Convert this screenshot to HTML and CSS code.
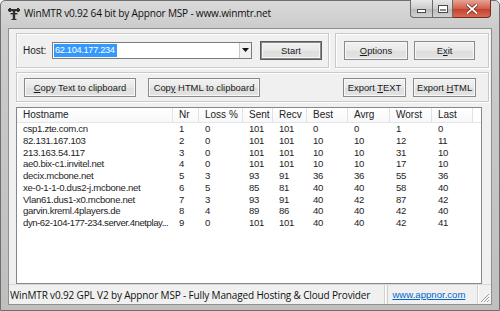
FILE: index.html
```html
<!DOCTYPE html>
<html>
<head>
<meta charset="utf-8">
<link rel="stylesheet" href="styles.css">
</head>
<body>
<div class="window">
  <div class="titlebar">
    <svg class="appicon" width="12" height="12" viewBox="0 0 12 12">
      <rect x="0" y="1" width="12" height="2.2" fill="#2e2e2e"/>
      <rect x="1" y="0" width="2" height="4" fill="#2e2e2e"/>
      <rect x="9" y="0" width="2" height="4" fill="#2e2e2e"/>
      <rect x="4.8" y="3" width="2.4" height="9" fill="#2e2e2e"/>
      <rect x="2.5" y="5" width="7" height="1.4" fill="#2e2e2e"/>
      <rect x="3.5" y="11" width="5" height="1" fill="#2e2e2e"/>
    </svg>
    <span class="title">WinMTR v0.92 64 bit by Appnor MSP - www.winmtr.net</span>
    <div class="winbtns">
      <div class="wb wb-min"><span class="minglyph"></span></div>
      <div class="wb wb-max"><span class="maxglyph"></span></div>
      <div class="wb wb-close">
        <svg width="12" height="10" viewBox="0 0 12 10"><path d="M1.5 1 L10.5 9 M10.5 1 L1.5 9" stroke="#6b1d14" stroke-width="3.2" stroke-linecap="square"/><path d="M1.5 1 L10.5 9 M10.5 1 L1.5 9" stroke="#fff" stroke-width="1.8" stroke-linecap="square"/></svg>
      </div>
    </div>
  </div>
  <div class="client">
    <div class="row1">
      <div class="group g-host">
        <span class="lbl">Host:</span>
        <div class="combo">
          <span class="combo-text"><span class="sel">62.104.177.234</span></span>
          <span class="combo-btn"><svg width="7" height="4" viewBox="0 0 7 4"><path d="M0 0 H7 L3.5 4 Z" fill="#111"/></svg></span>
        </div>
        <div class="btn btn-default btn-start"><span>Start</span></div>
      </div>
      <div class="group g-opts">
        <div class="btn btn-opt"><span><u>O</u>ptions</span></div>
        <div class="btn btn-exit"><span>E<u>x</u>it</span></div>
      </div>
    </div>
    <div class="group g-copy">
      <div class="btn btn-copy1"><span><u>C</u>opy Text to clipboard</span></div>
      <div class="btn btn-copy2"><span>Cop<u>y</u> HTML to clipboard</span></div>
      <div class="spacer"></div>
      <div class="btn btn-exp1"><span>Export <u>T</u>EXT</span></div>
      <div class="btn btn-exp2"><span>Export <u>H</u>TML</span></div>
    </div>
    <div class="listrow">
      <div class="list">
        <div class="grid head">
          <span>Hostname</span><span>Nr</span><span>Loss %</span><span>Sent</span><span>Recv</span><span>Best</span><span>Avrg</span><span>Worst</span><span>Last</span>
        </div>
        <div class="grid rows">
          <span>csp1.zte.com.cn</span><span>1</span><span>0</span><span>101</span><span>101</span><span>0</span><span>0</span><span>1</span><span>0</span>
          <span>82.131.167.103</span><span>2</span><span>0</span><span>101</span><span>101</span><span>10</span><span>10</span><span>12</span><span>11</span>
          <span>213.163.54.117</span><span>3</span><span>0</span><span>101</span><span>101</span><span>10</span><span>10</span><span>31</span><span>10</span>
          <span>ae0.bix-c1.invitel.net</span><span>4</span><span>0</span><span>101</span><span>101</span><span>10</span><span>10</span><span>17</span><span>10</span>
          <span>decix.mcbone.net</span><span>5</span><span>3</span><span>93</span><span>91</span><span>36</span><span>36</span><span>55</span><span>36</span>
          <span>xe-0-1-1-0.dus2-j.mcbone.net</span><span>6</span><span>5</span><span>85</span><span>81</span><span>40</span><span>40</span><span>58</span><span>40</span>
          <span>Vlan61.dus1-x0.mcbone.net</span><span>7</span><span>3</span><span>93</span><span>91</span><span>40</span><span>42</span><span>87</span><span>42</span>
          <span>garvin.kreml.4players.de</span><span>8</span><span>4</span><span>89</span><span>86</span><span>40</span><span>40</span><span>42</span><span>40</span>
          <span class="tight">dyn-62-104-177-234.server.4netplay...</span><span>9</span><span>0</span><span>101</span><span>101</span><span>40</span><span>40</span><span>42</span><span>41</span>
        </div>
      </div>
    </div>
    <div class="status">
      <div class="pane pane-main">WinMTR v0.92 GPL V2 by Appnor MSP - Fully Managed Hosting &amp; Cloud Provider</div>
      <div class="pane pane-link"><span class="link">www.appnor.com</span></div>
      <div class="grip">
        <svg width="12" height="12" viewBox="0 0 12 12"><path d="M11 3 L3 11 M11 6 L6 11 M11 9 L9 11" stroke="#9a9a9a" stroke-width="1"/><path d="M11.8 3.8 L3.8 11.8 M11.8 6.8 L6.8 11.8 M11.8 9.8 L9.8 11.8" stroke="#fff" stroke-width="1"/></svg>
      </div>
    </div>
  </div>
</div>
</body>
</html>
```
FILE: styles.css
```css
* { box-sizing: border-box; }
html, body { margin: 0; padding: 0; }
body { width: 500px; height: 311px; overflow: hidden; background: #fff; }

.window {
  width: 500px; height: 311px;
  display: flex; flex-direction: column;
  background: linear-gradient(#dadada 0px, #cbcbcb 28px, #bfbfbf 311px);
  border: 1px solid #6f6f6f;
  border-radius: 5px 5px 0 0;
  padding: 0 7px 7px 7px;
}

.titlebar {
  height: 27px; flex: none;
  display: flex; align-items: flex-start;
  position: relative;
}
.appicon { margin: 7px 0 0 0; flex: none; }
.title {
  margin: 5px 0 0 4px;
  font-family: "Open Sans", "Noto Sans", sans-serif;
  font-size: 10.1px; letter-spacing: -0.2px; color: #111;
  white-space: nowrap;
}
.winbtns {
  position: absolute; right: 1px; top: -1px;
  display: flex; height: 18px;
}
.wb {
  flex: none;
  height: 18px; display: flex; align-items: center; justify-content: center;
  border: 1px solid #6b6b6b; border-top: none;
}
.wb-min { width: 22px; border-radius: 0 0 0 4px; background: linear-gradient(#e8e8e8, #cdcdcd 50%, #b8b8b8 51%, #d2d2d2); border-right: none; }
.wb-max { width: 21px; background: linear-gradient(#e8e8e8, #cdcdcd 50%, #b8b8b8 51%, #d2d2d2); }
.wb-close { width: 38px; border-radius: 0 0 4px 0; border-left: none; border-color: #7a2a20; background: linear-gradient(#e6a494, #d0604c 50%, #c3402c 51%, #d66b52); }
.minglyph { width: 9px; height: 4px; background: #fff; border: 1px solid #4a4a4a; margin-top: 5px; }
.maxglyph { width: 10px; height: 8px; border: 1px solid #4a4a4a; box-shadow: inset 0 0 0 1px #fff, inset 0 2px 0 1px #fff; background: #8a8a8a; }

.client {
  flex: 1; display: flex; flex-direction: column;
  background: #f0f0f0;
  border: 1px solid #8f8f8f;
  padding: 4px 1px 0 7px;
  font-family: "Liberation Sans", Arial, sans-serif;
  font-size: 10px; color: #1a1a1a;
}

.row1 { display: flex; gap: 6px; height: 35px; }
.group {
  border: 1px solid #c9c9c9;
  box-shadow: inset 1px 1px 0 #fff, 1px 1px 0 #fff;
  display: flex; align-items: center;
}
.g-host { width: 313px; padding-left: 6px; }
.g-opts { flex: 1; padding-left: 7px; margin-right: 1px; }
.lbl { width: 29px; font-size: 10px; }
.combo {
  width: 200px; height: 17px;
  display: flex; background: #fff;
  border: 1px solid #7a7a7a;
  margin-top: -1px;
}
.combo-text { flex: 1; padding: 1px 0 0 1px; font-size: 9.2px; letter-spacing: -0.3px; }
.sel { background: #3399ff; color: #fff; padding: 0 2px 0 1px; display: inline-block; line-height: 13px; }
.combo-btn { width: 12px; display: flex; align-items: center; justify-content: center; background: #f0f0f0; border-left: 1px solid #c8c8c8; }

.btn {
  flex: none;
  height: 19px;
  display: flex; align-items: center; justify-content: center;
  background: linear-gradient(#f2f2f2, #e8e8e8 50%, #dedede 51%, #e3e3e3);
  border: 1px solid #8a8a8a;
  box-shadow: inset 0 0 0 1px #f8f8f8;
  font-size: 9.4px; color: #1a1a1a;
  white-space: nowrap;
}
.btn-default { border: 1px solid #5a5a5a; box-shadow: inset 0 0 0 1px #8a8a8a, inset 0 0 0 2px #f5f5f5; }
.btn-start { width: 62px; margin-left: 8px; }
.btn-opt { width: 64px; margin-left: 1px; }
.btn-exit { width: 61px; margin-left: 6px; }

.g-copy { height: 30px; margin-top: 4px; margin-right: 1px; padding-left: 7px; }
.btn-copy1 { width: 112px; }
.btn-copy2 { width: 112px; margin-left: 12px; }
.spacer { width: 83px; }
.btn-exp1 { width: 63px; }
.btn-exp2 { width: 63px; margin-left: 7px; }

.listrow { flex: 1; display: flex; padding-top: 5px; }
.list {
  width: 466px; height: 177px;
  background: #fff;
  border: 1px solid #828790;
}
.grid {
  display: grid;
  grid-template-columns: 156px 26px 44px 30px 34px 41px 42px 42px 41px;
}
.head { height: 15px; border-bottom: 1px solid #e5e5e5; }
.head span {
  padding: 1px 0 0 6px; font-size: 10px; color: #222;
  border-right: 1px solid #e2e2e2;
  background: linear-gradient(#ffffff, #f7f8fa);
}
.rows { grid-auto-rows: 11.75px; }
.rows span {
  padding-left: 6px; font-size: 9.6px; line-height: 11.75px; letter-spacing: -0.3px;
  white-space: nowrap; overflow: hidden; color: #1e1e1e;
}
.rows span.tight { letter-spacing: -0.45px; }

.status {
  height: 20px; margin: 0 -1px 0 -7px;
  display: flex; align-items: stretch;
  border-top: 1px solid #d8d8d8;
  background: #f0f0f0;
  font-family: "Open Sans", "Noto Sans", sans-serif;
  font-size: 10px; letter-spacing: -0.15px;
}
.pane { display: flex; align-items: center; border-right: 1px solid #d0d0d0; box-shadow: 1px 0 0 #fff; white-space: nowrap; }
.pane-main { width: 378px; padding-left: 1px; color: #111; }
.pane-link { width: 91px; margin-left: 2px; padding-left: 4px; border-left: 1px solid #d0d0d0; letter-spacing: 0; }
.link { color: #0066cc; text-decoration: underline; font-family: "Liberation Sans", Arial, sans-serif; font-size: 9.6px; }
.grip { flex: 1; display: flex; align-items: flex-end; justify-content: flex-end; padding: 0 1px 1px 0; }
```
